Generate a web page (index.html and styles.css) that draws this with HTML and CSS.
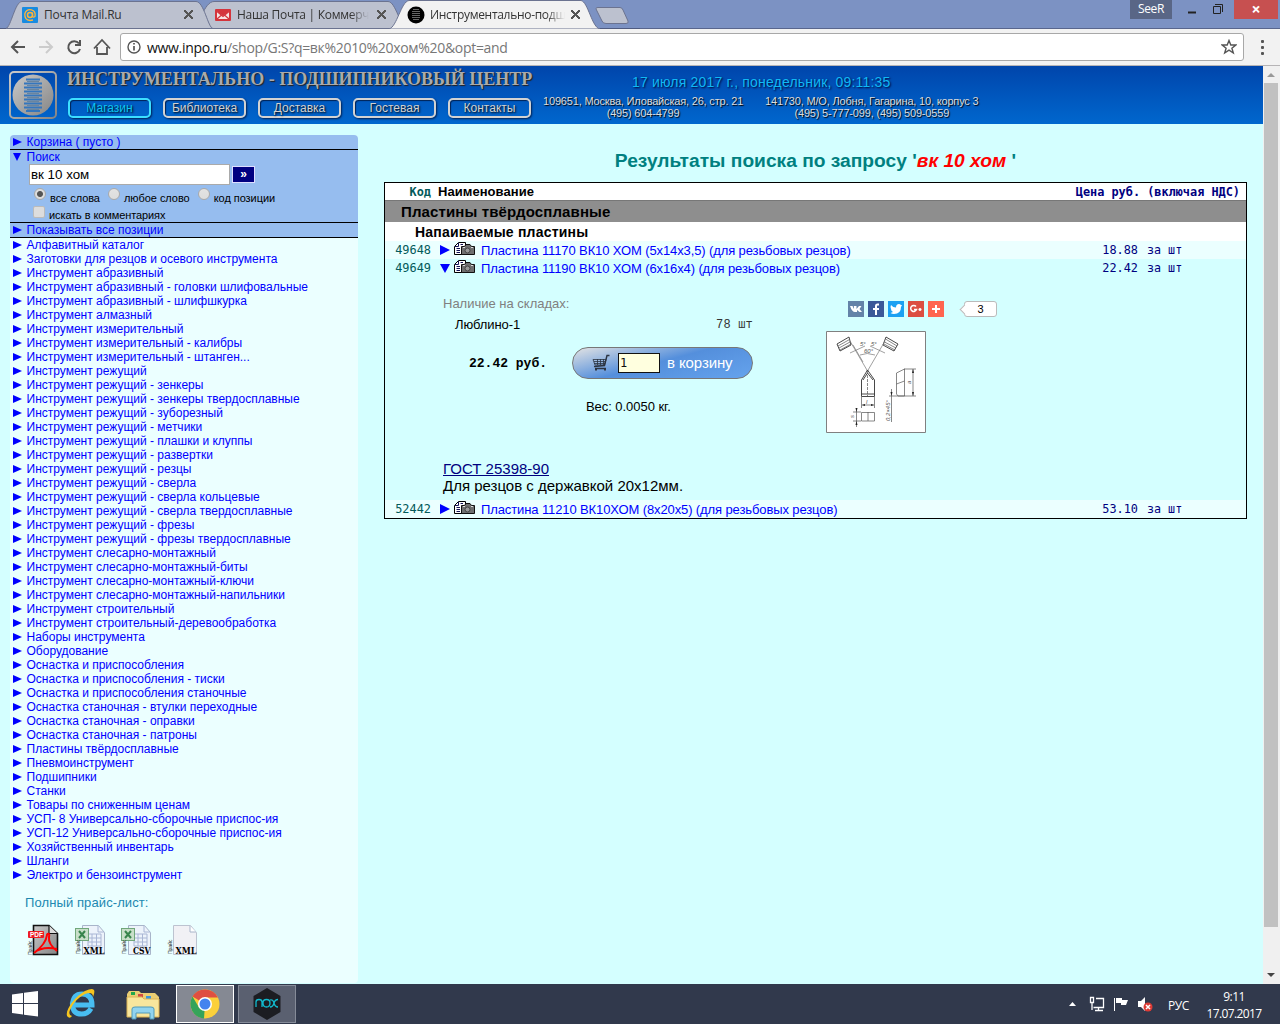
FILE: index.html
```html
<!DOCTYPE html>
<html lang="ru">
<head>
<meta charset="utf-8">
<title>Инструментально-подшипниковый центр</title>
<link rel="stylesheet" href="styles.css">
</head>
<body>
<div class="tabstrip">
  <svg class="tab-shapes" width="640" height="29" viewBox="0 0 640 29"><path d="M0 28.5H1280" stroke="#4f5b80"/><path d="M192 28.500C199 27 204 1.500 214 1.500H388C396 1.500 400 28 408 28.500Z" fill="#bcc1cf" stroke="#6b7390"/><path d="M6 28.500C11 27 15 1.500 22 1.500H196C204 1.500 208 28 213 28.500Z" fill="#bcc1cf" stroke="#6b7390"/><path d="M389 29C397 27 401 1.500 409 .5H581C588 1.500 592 28 600 29Z" fill="#f2f2f2" stroke="#6b7390"/><path d="M598 7.500H620Q622 7.500 623 10L628 21Q629 23.500 626 23.500H606Q603 23.500 602 21L596.500 10Q595 7.500 598 7.500Z" fill="#bcc1cf" stroke="#6b7390"/></svg>
  <div class="tabs">
    <div class="tab tab-mail"><svg width="16" height="16" viewBox="0 0 16 16"><rect width="16" height="16" rx="1" fill="#188be0"/><circle cx="8" cy="8" r="2.500" fill="none" stroke="#ffb33a" stroke-width="1.500"/><path d="M10.500 5.500V9Q11 11 13 9.500Q14 4 9.500 2.800Q4 2 2.800 7Q2.500 13 8 13.500L11 13" fill="none" stroke="#ffb33a" stroke-width="1.300"/></svg><span class="tab-title">Почта Mail.Ru</span><b class="tab-close"></b></div>
    <div class="tab tab-post"><svg width="16" height="16" viewBox="0 0 16 16"><rect y="2" width="16" height="12" rx="1" fill="#d4343c"/><path d="M2 4.500L8 9L14 4.500V12H2Z" fill="#f6e3e3"/><path d="M2 4.500L8 9.500L14 4.500M2 12L6 8.500M14 12L10 8.500" fill="none" stroke="#d4343c" stroke-width="1.200"/></svg><span class="tab-title">Наша Почта | Коммерче</span><b class="tab-close"></b></div>
    <div class="tab tab-shop"><svg width="18" height="18" viewBox="0 0 18 18"><circle cx="9" cy="9" r="8.500"/><path d="M6 3.500H12M5 5.500H13M5 7.500H13M5 9.500H13M5 11.500H13M6 13.500H12" stroke="#666"/></svg><span class="tab-title">Инструментально-подш</span><b class="tab-close"></b></div>
  </div>
  <div class="window-controls"><span class="profile">SeeR</span><svg width="62" height="19" viewBox="0 0 62 19"><path d="M16 12.500H24" stroke="#222" stroke-width="2"/><path d="M41.500 6.500H48.500V13.500H41.500ZM43 4.500H50.500V12" fill="none" stroke="#222"/></svg><span class="window-close">×</span></div>
</div>
<div class="toolbar">
  <svg width="115" height="36" viewBox="0 0 115 36" fill="none" stroke="#555" stroke-width="2"><path d="M25 18H12M18 12L12 18L18 24"/><path d="M39 18H52M46 12L52 18L46 24" stroke="#ccc"/><path d="M79 14.500A6 6 0 1 0 80 20M80 11V16H75"/><path d="M94 19.500L102 11L110 19.500M97 18V25H107V18" stroke-width="1.800"/></svg>
  <div class="address"><svg width="14" height="14" viewBox="0 0 14 14"><circle cx="7" cy="7" r="6" fill="none" stroke="#555" stroke-width="1.400"/><path d="M7 6V10.500M7 3V4.600" stroke="#555" stroke-width="1.700"/></svg><span class="url"><b>www.inpo.ru</b>/shop/G:S?q=вк%2010%20хом%20&amp;opt=and</span><svg class="star" width="16" height="16" viewBox="0 0 16 16"><path d="M8 1.500L9.800 6H14.800L10.900 9.200L12.300 14L8 11.200L3.700 14L5.100 9.200L1.200 6H6.200Z" fill="none" stroke="#555" stroke-width="1.400"/></svg></div>
  <svg width="36" height="36" viewBox="0 0 36 36" fill="#555"><rect x="17" y="11" width="3" height="3" rx="1"/><rect x="17" y="17" width="3" height="3" rx="1"/><rect x="17" y="23" width="3" height="3" rx="1"/></svg>
</div>
<div class="viewport">
<div class="page">
  <header class="site-header">
    <svg class="logo" width="50" height="50" viewBox="0 0 50 50"><defs><linearGradient id="steel" x2="1" y2="1"><stop stop-color="#c9c9c9"/><stop offset="1" stop-color="#858585"/></linearGradient><symbol id="camera" viewBox="0 0 22 14"><path d="M.5 4.500L4.500 .5H11.500V12.500H.5Z" fill="#fff" stroke="#000"/><path d="M4.500 1V4.500H1M2.500 6.500H6M2.500 8.500H6M2.500 10.500H6M6.500 2.500H9" fill="none" stroke="#115"/><path d="M7.500 4.500H10.500L12 2.500H16L17.500 4.500H20.500V12.500H7.500Z" fill="#6f6f6f" stroke="#111"/><circle cx="13.500" cy="8.500" r="2.500" fill="#999" stroke="#444"/><path d="M9 5.500H11M17 5.500H19" stroke="#ddd"/></symbol></defs><rect x="2" y="2" width="46" height="46" rx="4" fill="none" stroke="url(#steel)" stroke-width="2"/><circle cx="25" cy="25" r="20.500" fill="url(#steel)"/><path d="M18 9.500H32M16 13.500H34M16 17.500H34M16 21.500H34M16 25.500H34M16 29.500H34M16 33.500H34M16 37.500H34M18 41H32" stroke="#3476bd" stroke-width="1.800"/><path d="M19 11.500H31M19 15.500H31M19 19.500H31M19 23.500H31M19 27.500H31M19 31.500H31M19 35.500H31M19 39.500H31" stroke="#69859f"/></svg>
    <div class="brand"><div class="brand-name">ИНСТРУМЕНТАЛЬНО - ПОДШИПНИКОВЫЙ ЦЕНТР</div><nav class="menu"><a class="active">Магазин</a><a>Библиотека</a><a>Доставка</a><a>Гостевая</a><a>Контакты</a></nav></div>
    <div class="contacts"><div class="date">17 июля 2017 г., понедельник, 09:11:35</div><div class="offices"><div>109651, Москва, Иловайская, 26, стр. 21<br>(495) 604-4799</div><div>141730, М/О, Лобня, Гагарина, 10, корпус 3<br>(495) 5-777-099, (495) 509-0559</div></div></div>
  </header>
  <div class="content">
    <aside class="sidebar">
      <div class="panel">
        <div class="entry cart-line"><i class="right"></i><span>Корзина ( пусто )</span></div>
        <div class="entry search-head"><i class="down"></i><span>Поиск</span></div>
        <div class="search-line"><div class="search-field">вк 10 хом</div><div class="search-go">»</div></div>
        <div class="options"><i class="radio on"></i><span class="o1">все слова</span><i class="radio"></i><span class="o2">любое слово</span><i class="radio"></i><span>код позиции</span></div>
        <div class="options comments"><i class="check"></i><span>искать в комментариях</span></div>
        <div class="entry show-all"><i class="right"></i><span>Показывать все позиции</span></div>
      </div>
      <div class="catalog">
        <div class="entry"><i class="right"></i><span>Алфавитный каталог</span></div>
        <div class="entry"><i class="right"></i><span>Заготовки для резцов и осевого инструмента</span></div>
        <div class="entry"><i class="right"></i><span>Инструмент абразивный</span></div>
        <div class="entry"><i class="right"></i><span>Инструмент абразивный - головки шлифовальные</span></div>
        <div class="entry"><i class="right"></i><span>Инструмент абразивный - шлифшкурка</span></div>
        <div class="entry"><i class="right"></i><span>Инструмент алмазный</span></div>
        <div class="entry"><i class="right"></i><span>Инструмент измерительный</span></div>
        <div class="entry"><i class="right"></i><span>Инструмент измерительный - калибры</span></div>
        <div class="entry"><i class="right"></i><span>Инструмент измерительный - штанген...</span></div>
        <div class="entry"><i class="right"></i><span>Инструмент режущий</span></div>
        <div class="entry"><i class="right"></i><span>Инструмент режущий - зенкеры</span></div>
        <div class="entry"><i class="right"></i><span>Инструмент режущий - зенкеры твердосплавные</span></div>
        <div class="entry"><i class="right"></i><span>Инструмент режущий - зуборезный</span></div>
        <div class="entry"><i class="right"></i><span>Инструмент режущий - метчики</span></div>
        <div class="entry"><i class="right"></i><span>Инструмент режущий - плашки и клуппы</span></div>
        <div class="entry"><i class="right"></i><span>Инструмент режущий - развертки</span></div>
        <div class="entry"><i class="right"></i><span>Инструмент режущий - резцы</span></div>
        <div class="entry"><i class="right"></i><span>Инструмент режущий - сверла</span></div>
        <div class="entry"><i class="right"></i><span>Инструмент режущий - сверла кольцевые</span></div>
        <div class="entry"><i class="right"></i><span>Инструмент режущий - сверла твердосплавные</span></div>
        <div class="entry"><i class="right"></i><span>Инструмент режущий - фрезы</span></div>
        <div class="entry"><i class="right"></i><span>Инструмент режущий - фрезы твердосплавные</span></div>
        <div class="entry"><i class="right"></i><span>Инструмент слесарно-монтажный</span></div>
        <div class="entry"><i class="right"></i><span>Инструмент слесарно-монтажный-биты</span></div>
        <div class="entry"><i class="right"></i><span>Инструмент слесарно-монтажный-ключи</span></div>
        <div class="entry"><i class="right"></i><span>Инструмент слесарно-монтажный-напильники</span></div>
        <div class="entry"><i class="right"></i><span>Инструмент строительный</span></div>
        <div class="entry"><i class="right"></i><span>Инструмент строительный-деревообработка</span></div>
        <div class="entry"><i class="right"></i><span>Наборы инструмента</span></div>
        <div class="entry"><i class="right"></i><span>Оборудование</span></div>
        <div class="entry"><i class="right"></i><span>Оснастка и приспособления</span></div>
        <div class="entry"><i class="right"></i><span>Оснастка и приспособления - тиски</span></div>
        <div class="entry"><i class="right"></i><span>Оснастка и приспособления станочные</span></div>
        <div class="entry"><i class="right"></i><span>Оснастка станочная - втулки переходные</span></div>
        <div class="entry"><i class="right"></i><span>Оснастка станочная - оправки</span></div>
        <div class="entry"><i class="right"></i><span>Оснастка станочная - патроны</span></div>
        <div class="entry"><i class="right"></i><span>Пластины твёрдосплавные</span></div>
        <div class="entry"><i class="right"></i><span>Пневмоинструмент</span></div>
        <div class="entry"><i class="right"></i><span>Подшипники</span></div>
        <div class="entry"><i class="right"></i><span>Станки</span></div>
        <div class="entry"><i class="right"></i><span>Товары по сниженным ценам</span></div>
        <div class="entry"><i class="right"></i><span>УСП- 8 Универсально-сборочные приспос-ия</span></div>
        <div class="entry"><i class="right"></i><span>УСП-12 Универсально-сборочные приспос-ия</span></div>
        <div class="entry"><i class="right"></i><span>Хозяйственный инвентарь</span></div>
        <div class="entry"><i class="right"></i><span>Шланги</span></div>
        <div class="entry"><i class="right"></i><span>Электро и бензоинструмент</span></div>
      </div>
      <div class="price-title">Полный прайс-лист:</div>
      <div class="downloads">
        <svg width="32" height="32" viewBox="0 0 32 32"><path d="M6.500 1.500H22L30.500 9.500V30.500H6.500Z" fill="url(#steel)" stroke="#111" stroke-width="1.600"/><path d="M22 1.500V9.500H30.500" fill="#ddd" stroke="#111" stroke-width="1.200"/><path d="M7 29Q19 20 20 11C20 9 23 9 22 13Q21 20 30 27M7 29Q15 22 30 25" fill="none" stroke="#f00" stroke-width="2"/><rect x="1" y="7" width="16" height="7" rx="1" fill="#ed1c24"/><text x="3" y="12.800" class="pdf-label">PDF</text><text class="tiny-label" transform="translate(5 31) rotate(-90)">Прайс</text></svg>
        <svg width="32" height="32" viewBox="0 0 32 32"><path d="M8.500 1.500H24.500L30.500 8.500V30.500H8.500Z" fill="#edf3fb" stroke="#a8b5ca"/><path d="M24 2V8H30M14 10H27V22H14ZM18 10V22M22.500 10V22M14 14H27M14 18H27" fill="none" stroke="#a9b6d5"/><rect x="1.500" y="4.500" width="13" height="12" fill="#c8dfc9" stroke="#70a77a"/><path d="M5 7L11 14M11 7L5 14" stroke="#37844c" stroke-width="2"/><text x="9.500" y="30" class="file-label" textLength="21" lengthAdjust="spacingAndGlyphs">XML</text><text class="tiny-label" transform="translate(6 30) rotate(-90)">Прайс</text></svg>
        <svg width="32" height="32" viewBox="0 0 32 32"><path d="M8.500 1.500H24.500L30.500 8.500V30.500H8.500Z" fill="#edf3fb" stroke="#a8b5ca"/><path d="M24 2V8H30M14 10H27V22H14ZM18 10V22M22.500 10V22M14 14H27M14 18H27" fill="none" stroke="#a9b6d5"/><rect x="1.500" y="4.500" width="13" height="12" fill="#c8dfc9" stroke="#70a77a"/><path d="M5 7L11 14M11 7L5 14" stroke="#37844c" stroke-width="2"/><text x="13" y="30" class="file-label" textLength="17.500" lengthAdjust="spacingAndGlyphs">CSV</text><text class="tiny-label" transform="translate(6 30) rotate(-90)">Прайс</text></svg>
        <svg width="32" height="32" viewBox="0 0 32 32"><path d="M6.500 1.500H23.500L29.500 8.500V30.500H6.500Z" fill="#f1f1f5" stroke="#bcc3d0"/><path d="M23 2V8H29" fill="#fff" stroke="#a8b5ca"/><text x="8.500" y="30" class="file-label" textLength="21" lengthAdjust="spacingAndGlyphs">XML</text><text class="tiny-label" transform="translate(5 30) rotate(-90)">Прайс</text></svg>
      </div>
    </aside>
    <main class="results">
      <h1>Результаты поиска по запросу '<em>вк 10 хом </em>'</h1>
      <div class="table">
        <div class="thead"><span class="code">Код</span><span class="name">Наименование</span><span class="price-head">Цена руб. (включая НДС)</span></div>
        <div class="group">Пластины твёрдосплавные</div>
        <div class="subgroup">Напаиваемые пластины</div>
        <div class="row pale"><span class="code">49648</span><i class="right"></i><svg class="camera" width="22" height="14"><use href="#camera"/></svg><span class="name">Пластина 11170 ВК10 ХОМ (5х14х3,5) (для резьбовых резцов)</span><span class="cost">18.88</span><span class="unit">за шт</span></div>
        <div class="row"><span class="code">49649</span><i class="down"></i><svg class="camera" width="22" height="14"><use href="#camera"/></svg><span class="name">Пластина 11190 ВК10 ХОМ (6х16х4) (для резьбовых резцов)</span><span class="cost">22.42</span><span class="unit">за шт</span></div>
        <div class="details">
          <div class="purchase">
            <div class="stock-title">Наличие на складах:</div>
            <div class="stock"><span>Люблино-1</span><span class="qty">78 шт</span></div>
            <div class="buy"><b>22.42 руб.</b><div class="buy-button"><svg width="18" height="18" viewBox="0 0 18 18" fill="none" stroke="#2b3340"><path d="M17.500 1.500H15L12.500 11.500L2 12.500M3 14.500H14" stroke-width="1.400"/><path d="M1 5.500H14L12.500 11H3ZM2 7.500H13M2 9.500H13M5.500 5V11M8.500 5V11M11.500 5V11" stroke-width=".8"/><path d="M3 15.500H5M12 15.500H14" stroke-width="2"/></svg><span class="amount">1</span><span>в корзину</span></div></div>
            <div class="weight">Вес: 0.0050 кг.</div>
            <div class="standard"><a>ГОСТ 25398-90</a><br>Для резцов с державкой 20х12мм.</div>
          </div>
          <div class="media">
            <div class="social">
              <svg width="16" height="16" viewBox="0 0 16 16"><rect width="16" height="16" fill="#6383a8"/><path d="M2 5H4.500L6 8V5.500L5.500 5H8.500V8L11 5H13.500L11.500 8L14 11H11.500L9 9V11H7Q4 11 2 5Z" fill="#fff"/></svg>
              <svg width="16" height="16" viewBox="0 0 16 16"><rect width="16" height="16" fill="#3b5998"/><path d="M11 3.500H9.500Q8 3.500 8 5V14M5 8H11" fill="none" stroke="#fff" stroke-width="2"/></svg>
              <svg width="16" height="16" viewBox="0 0 16 16"><rect width="16" height="16" fill="#1da1f2"/><path d="M3 4Q5 6.500 8 6.500Q8 3 11 3Q12 3 13 4L14 4L13 6Q13 13 6 13Q4 13 2.500 12L5 11Q3 10 3 8Q2 6 3 4" fill="#fff"/></svg>
              <svg width="16" height="16" viewBox="0 0 16 16"><rect width="16" height="16" fill="#dc4e41"/><path d="M8 5.500A3 3 0 1 0 8.500 8.500H6M10.500 8.500H13.500M12 7V10" fill="none" stroke="#fff" stroke-width="1.500"/></svg>
              <svg width="16" height="16" viewBox="0 0 16 16"><rect width="16" height="16" fill="#ff6550"/><path d="M4 8H12M8 4V12" stroke="#fff" stroke-width="2"/></svg>
              <span class="counter">3</span>
            </div>
            <svg class="drawing" width="100" height="102" viewBox="0 0 100 102" fill="none" stroke="#555" stroke-width=".7"><path d="M.5 .5H99.500V101.500H.5Z" fill="#fff" stroke="#808080" stroke-width="1"/><path d="M11 13L23 6L25 14L14 20ZM60 6L72 13L68 20L57 14Z" stroke="#333" stroke-width=".9"/><path d="M12 15L23.500 8.500M13 17L24 11M14 19L25 13M59.500 8L71 15M58.500 11L70 17M58 13L69 19"/><path d="M24 10L41.500 40L59 10M27 14L37 31M34 24Q41 21 49 24M24 22L39 15M44 15L59 22" stroke="#777"/><path d="M35.500 49L41.500 39L48.500 49V65.500H35.500ZM37 49L41.500 42L47 49M35.500 63H48.500" stroke="#333" stroke-width=".9"/><path d="M41.500 40V65" stroke-dasharray="3 1"/><path d="M35.500 66V77M48.500 66V77M36 74H48M35.500 81.500H48.500V90H35.500ZM42 81V90M27 81H35M27 90H35M30.500 77V96M70.500 42L78.500 38V65H72L70.500 63ZM70.500 53L78.500 50M78 38H90M78 65H90M87 38V65M63 65H78M65.500 58V91"/><path d="M36 74L39 73V75ZM48 74L45 73V75ZM87 38L86 42H88ZM87 65L86 61H88ZM30.500 81L29.500 77H31.500ZM30.500 90L29.500 94H31.500ZM65.500 65L64.500 61H66.500Z" fill="#222" stroke="none"/><g class="dimensions"><text x="34" y="15">5°</text><text x="45" y="15">5°</text><text x="38" y="22">60°</text><text x="40" y="73">l</text><text transform="translate(85 53) rotate(-90)">a</text><text transform="translate(28 87) rotate(-90)">s</text><text transform="translate(64 90) rotate(-90)">0,2×45°</text></g></svg>
          </div>
        </div>
        <div class="row pale"><span class="code">52442</span><i class="right"></i><svg class="camera" width="22" height="14"><use href="#camera"/></svg><span class="name">Пластина 11210 ВК10ХОМ (8х20х5) (для резьбовых резцов)</span><span class="cost">53.10</span><span class="unit">за шт</span></div>
      </div>
    </main>
  </div>
</div>
<div class="scrollbar"><i class="scroll-up"></i><div class="thumb"></div><i class="scroll-down"></i></div>
</div>
<footer class="taskbar">
  <svg class="start" width="26" height="26" viewBox="0 0 26 26" fill="#fff"><path d="M0 3.500L11 2V12H0ZM12 1.800L26 0V12H12ZM0 13H11V23.500L0 22ZM12 13H26V25.500L12 23.700Z"/></svg>
  <svg class="explorer" width="32" height="32" viewBox="0 0 32 32"><path d="M26 20.500Q23 26 16.500 26Q8 26 7.500 17H27Q27 6 17 6Q8 6 7.500 17" fill="none" stroke="#48bdf1" stroke-width="5"/><path d="M3 29C-2 25 9 9 20 3Q33-3 28 9Q28 3 20 6Q10 11 5 22Q3 27 7 28Q5 31 3 29" fill="#f6c51f"/></svg>
  <svg class="folders" width="34" height="31" viewBox="0 0 34 31"><path d="M1 5L3 2H13L15 4H29L33 8V28H1Z" fill="#e9cd73"/><path d="M5 3H9V6H5Z" fill="#21a74b"/><path d="M12 5H17V8H12Z" fill="#d34a42"/><path d="M20 7H25V10H20Z" fill="#3a95dc"/><path d="M1 8H16L18 10H33V28H1Z" fill="#f8e69d" stroke="#dcb454"/><path d="M6 30V20Q6 18 9 18H25Q28 18 28 20V30H24V24H10V30Z" fill="#91d4ef" stroke="#509ab9"/></svg>
  <div class="task task-active"><svg width="30" height="30" viewBox="0 0 30 30"><circle cx="15" cy="15" r="14.500" fill="#fbd03b"/><path d="M15 15L2.500 7.500A14.500 14.500 0 0 1 28 8.500H15Z" fill="#df4f41"/><path d="M15 15L14 29.500A14.500 14.500 0 0 1 2.500 7.500L9 18.500Z" fill="#35a35a"/><circle cx="15" cy="15" r="7" fill="#fff"/><circle cx="15" cy="15" r="5.500" fill="#4484ee"/></svg></div>
  <div class="task"><svg width="30" height="34" viewBox="0 0 30 34"><path d="M15 1L28.500 9V25L15 33L1.500 25V9Z" fill="#1c1d22"/><path d="M4 20V15Q4 12.500 7 12.500Q10 12.500 10 15V20M11 16Q11 12.500 14.500 12.500Q18 12.500 18 16Q18 20 14.500 20Q11 20 11 16M18 13Q21 12 22 16Q23 20 26 20M26 12.500Q23 12.500 22 16Q21 20 18 20" fill="none" stroke="#11bace" stroke-width="1.300"/></svg></div>
  <div class="tray"><svg width="88" height="20" viewBox="0 0 88 20"><path d="M1 12L4.500 8L8 12Z" fill="#fff"/><path d="M28 4.500H35.500V13.500H25.500M30.500 14V16M27 16.500H35M22.500 3.500H25.500V8.500H22.500ZM24 9V16" fill="none" stroke="#fff" stroke-width="1.300"/><path d="M46.500 4V17" stroke="#fff"/><path d="M48 4H54V6H60L58 11H53V9H48Z" fill="#fff"/><path d="M70 7H73L77 3V17L73 13H70Z" fill="#fff"/><circle cx="80" cy="13" r="4.500" fill="#dd3b35"/><path d="M78 11L82 15M82 11L78 15" stroke="#fff" stroke-width="1.500"/></svg><span class="lang">РУС</span><span class="clock">9:11<br>17.07.2017</span></div>
</footer>
</body>
</html>
```
FILE: styles.css
```css
* { box-sizing: border-box; }
body { margin: 0; width: 1280px; height: 1024px; overflow: hidden; font-family: "Liberation Sans", sans-serif; background: #d4ffff; }
svg { display: block; flex: none; }
.tabstrip { height: 29px; background: #7c92c3; border-bottom: 1px solid #59668d; display: flex; position: relative; font: 12px "Open Sans", sans-serif; }
.tab-shapes { position: absolute; left: 0; top: 0; }
.tabs { display: flex; position: relative; width: 640px; }
.tab { display: flex; align-items: center; height: 29px; color: #333; }
.tab-mail { width: 193px; padding-left: 22px; }
.tab-post { width: 193px; padding-left: 22px; }
.tab-shop { width: 200px; padding-left: 21px; }
.tab-title { flex: none; width: 132px; margin-left: 6px; white-space: nowrap; letter-spacing: -.2px; }
.tab-post .tab-title { letter-spacing: -.28px; -webkit-mask-image: linear-gradient(to right, #000 86%, transparent); }
.tab-shop .tab-title { margin-left: 5px; width: 135px; letter-spacing: -.3px; -webkit-mask-image: linear-gradient(to right, #000 86%, transparent); }
.tab-close { width: 9px; height: 9px; margin-left: 8px; background: linear-gradient(45deg, transparent 44%, #555 44% 56%, transparent 56%), linear-gradient(-45deg, transparent 44%, #555 44% 56%, transparent 56%); }
.tab-shop .tab-close { margin-left: 6px; }
.window-controls { display: flex; margin-left: auto; }
.profile { width: 42px; height: 19px; background: #596686; color: #fff; text-align: center; line-height: 18px; letter-spacing: -.4px; }
.window-close { width: 44px; height: 19px; background: #c75050; color: #fff; text-align: center; font: bold 16px/18px "Open Sans", sans-serif; margin-right: 2px; }
.toolbar { height: 37px; background: #f2f2f2; display: flex; border-bottom: 1px solid #b6b4b6; }
.address { margin: 4px 0 4px 5px; width: 1124px; height: 28px; border: 1px solid #a8a8a8; border-radius: 3px; background: #fff; display: flex; align-items: center; padding: 0 6px; }
.url { margin-left: 6px; font: 14px "Open Sans", sans-serif; color: #777; letter-spacing: -.31px; }
.url b { color: #111; font-weight: normal; }
.star { margin-left: auto; }
.viewport { display: flex; height: 918px; }
.page { width: 1263px; background: #d4ffff; }
.site-header { height: 58px; background: linear-gradient(#0045ab, #0067ce); display: flex; padding: 4px 0 0 8px; }
.brand { margin-left: 9px; width: 465px; }
.brand-name { font: bold 18px/19px "Liberation Serif", serif; color: #aaa; text-shadow: 1px 1px 1px #222; white-space: nowrap; }
.menu { display: flex; gap: 12px; margin: 9px 0 0 1px; }
.menu a { flex: none; width: 83px; height: 20px; border: 2px solid #d2d2d2; border-radius: 5px; box-shadow: 1px 1px 2px #002356, inset 1px 1px 1px #002356; color: #d2d2d2; font-size: 12px; line-height: 16px; text-align: center; text-shadow: 1px 1px 2px #000; }
.menu .active { border-color: #3ddfff; color: #0bc5f4; }
.contacts { width: 480px; white-space: nowrap; }
.date { margin: 4px 0 0 100px; color: #10b9f5; font-size: 14px; line-height: 16px; letter-spacing: .18px; text-shadow: 1px 1px 2px #003; }
.offices { display: flex; gap: 22px; margin: 5px 0 0 11px; color: #dcdcdc; font-size: 11px; line-height: 12px; letter-spacing: -.18px; text-align: center; text-shadow: 1px 1px 1px #000; }
.content { display: flex; padding-top: 11px; }
.sidebar { width: 348px; height: 848px; margin-left: 10px; background: #ebffff; border-radius: 4px; overflow: hidden; font-size: 12px; }
.panel { background: #96bdef; }
.entry { height: 14px; line-height: 14px; display: flex; align-items: center; color: #00f; white-space: nowrap; }
.right, .down { flex: none; width: 0; height: 0; }
.right { border: 4px solid transparent; border-left: 9px solid #00f; border-right: 0; margin-left: 3px; }
.down { border: 4px solid transparent; border-top: 8px solid #00f; border-bottom: 0; margin-left: 3px; }
.entry .right { margin-right: 4.500px; }
.entry .down { margin-right: 5.500px; }
.cart-line { height: 15px; border-bottom: 1px solid #000; }
.search-line { display: flex; align-items: center; padding-left: 19px; }
.search-field { width: 201px; height: 21px; background: #fff; border: 1px solid #aaa; font-size: 13.330px; line-height: 19px; padding-left: 1px; }
.search-go { width: 23px; height: 17px; border: 1px solid #ddf; background: #000080; color: #fff; text-align: center; font: bold 12px/14px "Liberation Sans", sans-serif; margin-left: 2px; }
.options { display: flex; height: 19px; padding-left: 24px; font-size: 11px; align-items: center; line-height: 14px; white-space: nowrap; letter-spacing: -.05px; }
.options span { padding-top: 6px; }
.radio { width: 12px; height: 12px; border: 1px solid #aaa; border-radius: 50%; background: linear-gradient(#e3e3e3, #ddd); margin-right: 4px; margin-bottom: 1px; }
.on { background: radial-gradient(circle, #555 0 2.500px, #ddd 3.500px); }
.o1 { margin-right: 8px; }
.o2 { margin-right: 8px; }
.comments { height: 18px; letter-spacing: -.1px; }
.comments span { padding-top: 4px; }
.check { width: 12px; height: 12px; border: 1px solid #bbb; border-radius: 2px; background: #ddd; margin: 0 4px 3px -1px; }
.show-all { height: 16px; border-top: 1px solid #000; border-bottom: 1px solid #000; }
.price-title { margin: 13px 0 0 15px; font-size: 13px; line-height: 16px; letter-spacing: .1px; color: #2188b0; }
.downloads { display: flex; gap: 15px; padding: 13px 0 0 17px; }
.downloads svg + svg { margin-left: -.4px; }
.pdf-label { font: bold 6.500px "Liberation Sans", sans-serif; fill: #fff; }
.file-label { font: bold 10px "DejaVu Serif", serif; fill: #000; }
.tiny-label { font: 5px "Liberation Sans", sans-serif; fill: #222; }
.results { width: 863px; margin-left: 26px; }
h1 { margin: 14px 0 10px; text-align: center; font-size: 19.200px; line-height: 23px; color: #008080; }
h1 em { color: #f00; }
.table { height: 337px; border: 1px solid #000; }
.thead { height: 17px; background: #fff; display: flex; line-height: 17px; font-size: 13px; font-weight: bold; }
.code { width: 46px; text-align: right; font: 11.900px/17px "DejaVu Sans Mono", monospace; color: #045a5a; }
.thead .code { font-weight: bold; line-height: 19px; }
.thead .name { margin-left: 7px; letter-spacing: .05px; }
.price-head { margin-left: auto; padding-right: 6px; font: bold 11.860px/19px "DejaVu Sans Mono", monospace; color: #000080; }
.group { height: 22px; background: #8e8e8e; border-top: 1px solid #777; padding-left: 16px; font: bold 15px/21px "Liberation Sans", sans-serif; letter-spacing: .13px; }
.subgroup { height: 19px; background: #fff; padding-left: 30px; font: bold 14px/20px "Liberation Sans", sans-serif; letter-spacing: .2px; }
.row { height: 18px; display: flex; align-items: center; white-space: nowrap; color: #00f; font-size: 13px; }
.pale { background: #ebffff; }
.row .right { border-width: 5px 0 5px 10px; margin: 0 4px 0 9px; }
.row .down { border-left-width: 5px; border-right-width: 5px; border-top-width: 9px; margin: 0 4px 0 9px; }
.camera { margin-top: -3px; margin-right: 5px; }
.row .name { width: 598px; letter-spacing: -.11px; }
.cost { width: 59px; text-align: right; font: 11.860px/17px "DejaVu Sans Mono", monospace; color: #000080; }
.unit { margin-left: 9px; font: 11.700px/17px "DejaVu Sans Mono", monospace; color: #000080; }
.details { height: 223px; display: flex; padding-left: 58px; }
.purchase { width: 383px; padding-top: 19px; font-size: 13px; }
.stock-title { color: #808080; line-height: 16px; }
.stock { display: flex; justify-content: space-between; padding: 5px 73px 0 12px; line-height: 16px; letter-spacing: -.1px; }
.qty { font: 12px/16px "Liberation Mono", monospace; letter-spacing: .2px; color: #333; }
.buy { display: flex; align-items: center; margin-top: 14px; padding-left: 26px; }
.buy b { width: 103px; font: bold 13px "Liberation Mono", monospace; }
.buy-button { width: 181px; height: 32px; border: 1px solid #777; border-radius: 16px; display: flex; align-items: center; padding: 0 0 1px 19px; background: linear-gradient(165deg, #e3e3e3, #548fdc 48%, #65a3ed); color: #fff; font-size: 15px; letter-spacing: -.1px; }
.amount { width: 42px; height: 20px; margin: 1px 7px 0 8px; padding-left: 1px; border: 1px solid #111; background: #ffffdf; color: #111; font: 12px/18px "DejaVu Sans Mono", monospace; }
.weight { margin: 20px 0 0 143px; line-height: 16px; letter-spacing: -.05px; }
.standard { margin-top: 45px; font-size: 15px; line-height: 17px; }
.standard a { color: #000080; text-decoration: underline; }
.media { padding-top: 24px; }
.social { display: flex; gap: 4px; padding-left: 22px; align-items: center; height: 16px; }
.counter { width: 33px; height: 16px; margin-left: 16px; border: 1px solid #bbb; border-radius: 3px; background: #fff; font-size: 11px; line-height: 15px; text-align: center; position: relative; }
.counter::before { content: ""; position: absolute; left: -4px; top: 4px; width: 6px; height: 6px; background: #fff; border-left: 1px solid #bbb; border-bottom: 1px solid #bbb; transform: rotate(45deg); }
.drawing { margin-top: 14px; }
.dimensions { fill: #555; stroke: none; font: italic 6px "Liberation Sans", sans-serif; }
.scrollbar { width: 17px; background: #f0f0f0; padding: 7px 0 0 1px; display: flex; flex-direction: column; }
.scroll-up { border: 4px solid transparent; border-top: 0; border-bottom-color: #999; margin-left: 3px; width: 0; }
.thumb { width: 14px; height: 844px; background: #c1c1c1; margin: 6px 0 0; }
.scroll-down { border: 4px solid transparent; border-bottom: 0; border-top-color: #444; margin: 46px 0 0 3px; width: 0; }
.taskbar { height: 40px; background: #31394c; display: flex; align-items: center; color: #fff; }
.start { margin-left: 12px; }
.explorer { margin-left: 27px; }
.folders { margin-left: 29px; }
.task { width: 58px; height: 38px; background: #5a6070; border: 1px solid #858b98; display: flex; align-items: center; justify-content: center; margin-left: 4px; }
.task-active { background: #858993; border-color: #fff; margin-left: 16px; }
.tray { margin-left: auto; display: flex; align-items: center; font: 12px/17px "Open Sans", sans-serif; }
.lang { margin: 2px 0 0 12px; width: 26px; letter-spacing: -.4px; }
.clock { width: 64px; margin: 2px 14px 0 8px; text-align: center; letter-spacing: -.6px; }
```
